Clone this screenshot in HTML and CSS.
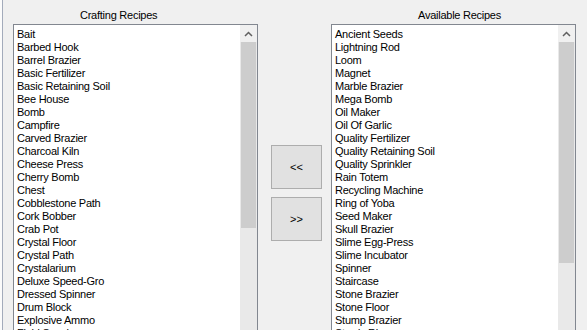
FILE: index.html
```html
<!DOCTYPE html>
<html lang="en">
<head>
  <meta charset="UTF-8">
  <title>Recipes</title>
  <link rel="stylesheet" href="styles.css">
</head>
<body>
  <div class="window">
    <div class="panel">
      <div class="panel-title title-left">Crafting Recipes</div>
      <div class="listbox">
        <div class="items">
          <div>Bait</div>
          <div>Barbed Hook</div>
          <div>Barrel Brazier</div>
          <div>Basic Fertilizer</div>
          <div>Basic Retaining Soil</div>
          <div>Bee House</div>
          <div>Bomb</div>
          <div>Campfire</div>
          <div>Carved Brazier</div>
          <div>Charcoal Kiln</div>
          <div>Cheese Press</div>
          <div>Cherry Bomb</div>
          <div>Chest</div>
          <div>Cobblestone Path</div>
          <div>Cork Bobber</div>
          <div>Crab Pot</div>
          <div>Crystal Floor</div>
          <div>Crystal Path</div>
          <div>Crystalarium</div>
          <div>Deluxe Speed-Gro</div>
          <div>Dressed Spinner</div>
          <div>Drum Block</div>
          <div>Explosive Ammo</div>
          <div>Field Snack</div>
        </div>
        <div class="scrollbar">
          <div class="arrow">
            <svg width="9" height="6" viewBox="0 0 9 6"><path d="M1 5 L4.5 1.5 L8 5" fill="none" stroke="#606060" stroke-width="1.5"/></svg>
          </div>
          <div class="thumb thumb-left"></div>
        </div>
      </div>
    </div>

    <div class="buttons">
      <button class="move-btn">&lt;&lt;</button>
      <button class="move-btn">&gt;&gt;</button>
    </div>

    <div class="panel">
      <div class="panel-title title-right">Available Recipes</div>
      <div class="listbox">
        <div class="items">
          <div>Ancient Seeds</div>
          <div>Lightning Rod</div>
          <div>Loom</div>
          <div>Magnet</div>
          <div>Marble Brazier</div>
          <div>Mega Bomb</div>
          <div>Oil Maker</div>
          <div>Oil Of Garlic</div>
          <div>Quality Fertilizer</div>
          <div>Quality Retaining Soil</div>
          <div>Quality Sprinkler</div>
          <div>Rain Totem</div>
          <div>Recycling Machine</div>
          <div>Ring of Yoba</div>
          <div>Seed Maker</div>
          <div>Skull Brazier</div>
          <div>Slime Egg-Press</div>
          <div>Slime Incubator</div>
          <div>Spinner</div>
          <div>Staircase</div>
          <div>Stone Brazier</div>
          <div>Stone Floor</div>
          <div>Stump Brazier</div>
          <div>Sturdy Ring</div>
        </div>
        <div class="scrollbar">
          <div class="arrow">
            <svg width="9" height="6" viewBox="0 0 9 6"><path d="M1 5 L4.5 1.5 L8 5" fill="none" stroke="#606060" stroke-width="1.5"/></svg>
          </div>
          <div class="thumb thumb-right"></div>
        </div>
      </div>
    </div>
  </div>
</body>
</html>
```

FILE: styles.css
```css
html, body {
  margin: 0;
  padding: 0;
  background-color: #fbfbfb;
  overflow: hidden;
}
body {
  font-family: "Liberation Sans", Arial, sans-serif;
  font-size: 11px;
  letter-spacing: -0.25px;
  color: #000;
}
.window {
  display: flex;
  margin-left: 2px;
  width: 580px;
  height: 330px;
  border-left: 1px solid #a3abbb;
  border-right: 1px solid #a3abbb;
  background-color: #f0f0f0;
  padding-left: 10px;
  box-sizing: content-box;
}
.panel {
  display: flex;
  flex-direction: column;
  width: 245px;
}
.panel-title {
  flex: none;
  height: 24px;
  line-height: 13px;
  padding-top: 9px;
  box-sizing: border-box;
}
.title-left {
  padding-left: 67px;
}
.title-right {
  padding-left: 87px;
}
.listbox {
  flex: none;
  display: flex;
  height: 320px;
  background-color: #fff;
  border: 1px solid #828790;
}
.items {
  flex: 1;
  padding: 3px 0 0 3px;
  line-height: 13px;
  white-space: nowrap;
  overflow: hidden;
}
.scrollbar {
  width: 17px;
  display: flex;
  flex-direction: column;
  background-color: #e9e9e9;
}
.arrow {
  height: 17px;
  display: flex;
  align-items: center;
  justify-content: center;
  background-color: #f0f0f0;
}
.thumb {
  margin: 0 1px;
  background-color: #cdcdcd;
}
.thumb-left {
  height: 186px;
}
.thumb-right {
  height: 221px;
}
.buttons {
  display: flex;
  flex-direction: column;
  gap: 8px;
  width: 51px;
  margin: 145px 9px 0 13px;
}
.move-btn {
  width: 51px;
  height: 44px;
  padding: 0;
  font-family: "Liberation Sans", Arial, sans-serif;
  font-size: 11px;
  color: #000;
  background-color: #e1e1e1;
  border: 1px solid #adadad;
  border-radius: 0;
}
```
